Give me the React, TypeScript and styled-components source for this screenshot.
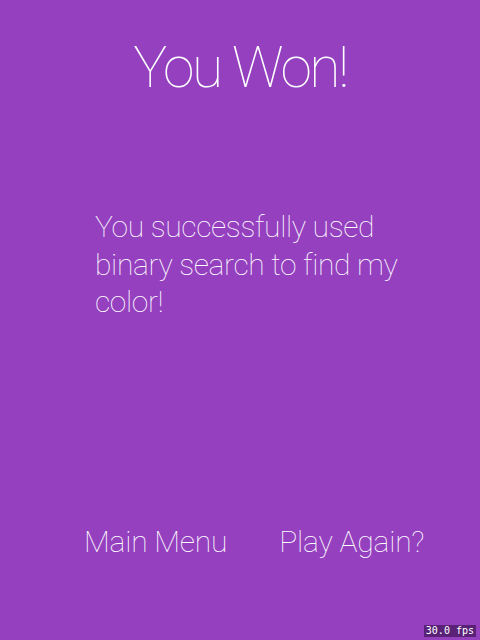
import React from "react";
import styled, { createGlobalStyle } from "styled-components";

const Global = createGlobalStyle`
  html, body { margin: 0; padding: 0; background: #9541bf; }
  body { font-family: "Roboto", "Helvetica Neue", sans-serif; }
`;

const Screen = styled.div`
  position: relative;
  width: 480px;
  height: 640px;
  background: #9541bf;
  color: #ffffff;
  display: flex;
  flex-direction: column;
  align-items: center;
  box-sizing: border-box;
  padding-top: 36px;
  font-family: "Roboto", sans-serif;
  font-weight: 100;
`;

const Title = styled.h1`
  margin: 0;
  font-size: 57px;
  font-weight: 100;
  line-height: 64px;
  letter-spacing: -2.4px;
  text-align: center;
`;

const Message = styled.p`
  margin: 108px 0 0 95px;
  width: 318px;
  align-self: flex-start;
  font-size: 30px;
  font-weight: 100;
  line-height: 37.5px;
  letter-spacing: -0.35px;
`;

const Actions = styled.div`
  margin: auto 0 80px 84px;
  align-self: flex-start;
  display: flex;
  gap: 52px;
  align-items: center;
`;

const ActionButton = styled.button`
  background: none;
  border: none;
  padding: 0;
  color: #ffffff;
  font-family: inherit;
  font-weight: 100;
  font-size: 30px;
  line-height: 36px;
  letter-spacing: -0.2px;
  cursor: pointer;
`;

const FpsBadge = styled.div`
  position: absolute;
  right: 4px;
  bottom: 3px;
  padding: 0 2px;
  background: rgba(40, 10, 60, 0.55);
  color: #ffffff;
  font-family: "DejaVu Sans Mono", monospace;
  font-size: 10px;
  line-height: 12px;
`;

export default function App() {
  return (
    <>
      <Global />
      <Screen>
        <Title>You Won!</Title>
        <Message>You successfully used binary search to find my color!</Message>
        <Actions>
          <ActionButton>Main Menu</ActionButton>
          <ActionButton>Play Again?</ActionButton>
        </Actions>
        <FpsBadge>30.0 fps</FpsBadge>
      </Screen>
    </>
  );
}
